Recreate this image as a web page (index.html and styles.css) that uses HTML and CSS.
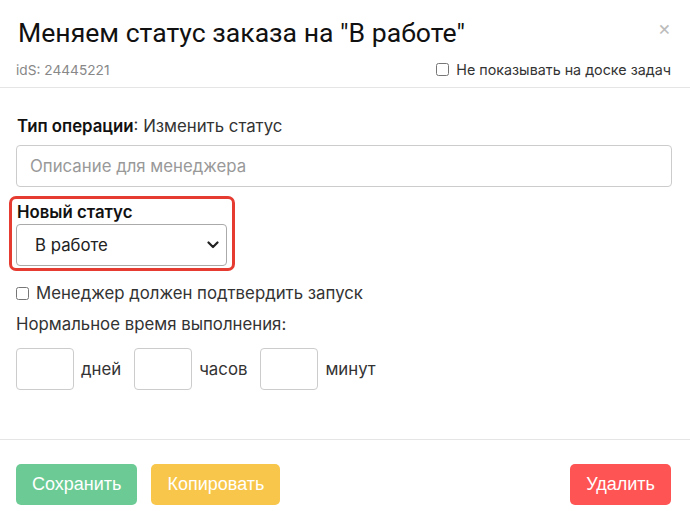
FILE: index.html
```html
<!DOCTYPE html>
<html lang="ru">
<head>
  <meta charset="UTF-8" />
  <meta name="viewport" content="width=device-width, initial-scale=1.0"/>
  <title>Меняем статус заказа</title>
  <link rel="stylesheet" href="styles.css">
</head>
<body>

  <div class="modal">
    <div class="modal-header">
      <div class="title-row">
        <h2 class="modal-title">Меняем статус заказа на "В работе"</h2>
        <span class="close">&times;</span>
      </div>
      <div class="meta-row">
        <span class="ids">idS: 24445221</span>
        <label class="check small"><input type="checkbox"> Не показывать на доске задач</label>
      </div>
    </div>

    <div class="modal-body">
      <div class="op-type"><b>Тип операции</b>: Изменить статус</div>
      <input class="text-input" type="text" placeholder="Описание для менеджера">

      <div class="status-box">
        <div class="field-label">Новый статус</div>
        <div class="select">
          <span>В работе</span>
          <svg width="12" height="8" viewBox="0 0 12 8"><path d="M1.5 1.5 L6 6 L10.5 1.5" fill="none" stroke="#222" stroke-width="2.2" stroke-linecap="round" stroke-linejoin="round"/></svg>
        </div>
      </div>

      <label class="check"><input type="checkbox"> Менеджер должен подтвердить запуск</label>
      <div class="time-label">Нормальное время выполнения:</div>
      <div class="time-row">
        <input class="num" type="text"><span>дней</span>
        <input class="num" type="text"><span>часов</span>
        <input class="num" type="text"><span>минут</span>
      </div>
    </div>

    <div class="modal-footer">
      <button class="btn green">Сохранить</button>
      <button class="btn yellow">Копировать</button>
      <button class="btn red">Удалить</button>
    </div>
  </div>

</body>
</html>
```

FILE: styles.css
```css
body {
  margin: 0;
  background: #fff;
  font-family: Inter, 'Noto Sans', sans-serif;
  color: #222;
}

.modal {
  width: 690px;
  height: 511px;
  display: flex;
  flex-direction: column;
}

.modal-header {
  box-sizing: border-box;
  height: 88px;
  padding: 16px 16px 0 16px;
  border-bottom: 1px solid #e5e5e5;
}

.title-row {
  display: flex;
  justify-content: space-between;
  align-items: flex-start;
}

.modal-title {
  margin: 0;
  padding-left: 2px;
  font-family: Roboto, sans-serif;
  font-weight: 400;
  font-size: 26.6px;
  line-height: 34px;
  color: #111;
}

.close {
  color: #bbb;
  font-size: 20px;
  line-height: 20px;
  margin-top: 2px;
  margin-right: 3px;
}

.meta-row {
  display: flex;
  justify-content: space-between;
  align-items: center;
  margin-top: 11px;
}

.ids {
  font-size: 13.7px;
  color: #888;
}

.check {
  display: flex;
  align-items: center;
  gap: 7px;
  font-size: 16.8px;
  color: #333;
}

.check input {
  margin: 0;
  width: 13px;
  height: 13px;
}

.check.small {
  font-size: 14.3px;
  margin-right: 3px;
}

.modal-body {
  flex: 1;
  padding: 28px 18px 0 16px;
  border-bottom: 1px solid #e5e5e5;
}

.op-type {
  font-size: 16.8px;
  padding-left: 1px;
  margin-bottom: 9px;
  color: #333;
}

.op-type b {
  font-weight: 600;
  color: #111;
}

.text-input {
  box-sizing: border-box;
  width: 656px;
  height: 42px;
  border: 1px solid #ccc;
  border-radius: 4px;
  padding: 0 13px;
  font-family: inherit;
  font-size: 16.8px;
}

.text-input::placeholder {
  color: #999;
}

.status-box {
  margin: 9px 0 0 -7px;
  width: 211px;
  border: 3px solid #e53b30;
  border-radius: 7px;
  padding: 3px 5px 2px 4px;
}

.field-label {
  font-weight: 600;
  font-size: 16.8px;
  line-height: 20px;
  color: #111;
  margin-bottom: 2px;
  padding-left: 1px;
}

.select {
  box-sizing: border-box;
  height: 42px;
  border: 1px solid #aaa;
  border-radius: 4px;
  display: flex;
  align-items: center;
  justify-content: space-between;
  padding: 0 7px 0 18px;
  font-size: 16.8px;
}

.status-box + .check {
  margin-top: 12px;
}

.time-label {
  font-size: 16.8px;
  color: #333;
  margin-top: 11px;
}

.time-row {
  display: flex;
  align-items: center;
  margin-top: 14px;
  font-size: 16.8px;
  color: #333;
}

.num {
  box-sizing: border-box;
  width: 58px;
  height: 42px;
  border: 1px solid #ccc;
  border-radius: 4px;
  margin: 0 7px 0 0;
}

.time-row span {
  margin-right: 13px;
}

.modal-footer {
  box-sizing: border-box;
  height: 71px;
  display: flex;
  align-items: flex-start;
  padding: 24px 19px 0 16px;
  gap: 14px;
}

.btn {
  height: 41px;
  border: none;
  border-radius: 5px;
  color: #fff;
  font-family: 'Liberation Sans', Arial, sans-serif;
  font-size: 18px;
  padding: 0 16px;
}

.green { background: #6ccb95; }
.yellow { background: #f7c64a; }
.red { background: #ff5454; margin-left: auto; }
```
